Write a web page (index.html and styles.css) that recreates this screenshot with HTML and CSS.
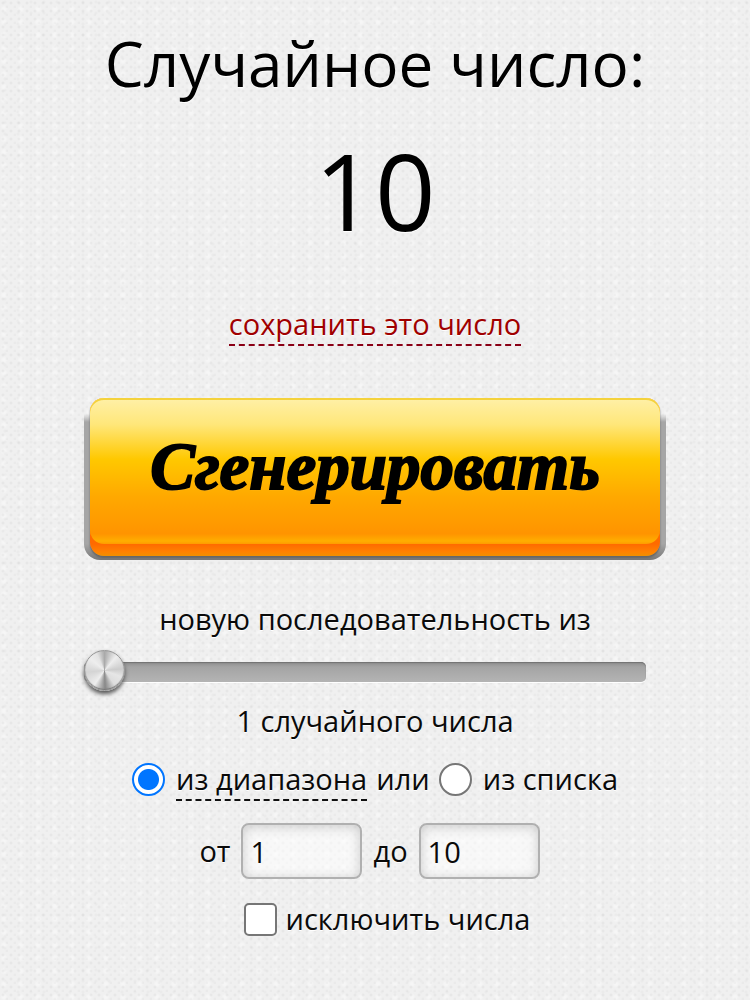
FILE: index.html
```
<!DOCTYPE html>
<html lang="ru">
<head>
    <title>Случайное число</title>
    <meta charset="utf-8">
    <meta name="viewport" content="width=device-width, initial-scale=1">
    <link rel="stylesheet" href="styles.css">
</head>
<body>
    <main class="generator">
        <h1>Случайное число:</h1>
        <output class="result">10</output>
        <a href="#" class="save-link">сохранить это число</a>

        <button type="button" class="generate"><span class="generate-face">Сгенерировать</span></button>

        <label class="caption" for="count">новую последовательность из</label>
        <input type="range" class="slider" id="count" min="1" max="100" value="1">
        <p class="caption">1 случайного числа</p>

        <div class="row source">
            <input type="radio" name="source" id="from-range" checked>
            <label for="from-range" class="active">из диапазона</label>
            <span>или</span>
            <input type="radio" name="source" id="from-list">
            <label for="from-list">из списка</label>
        </div>

        <div class="row limits">
            <label for="min">от</label>
            <input type="text" id="min" value="1">
            <label for="max">до</label>
            <input type="text" id="max" value="10">
        </div>

        <div class="row exclude">
            <input type="checkbox" id="exclude">
            <label for="exclude">исключить числа</label>
        </div>
    </main>
</body>
</html>
```

FILE: styles.css
```
* {
    margin: 0;
    padding: 0;
    box-sizing: border-box;
}

body {
    min-height: 100vh;
    color: #0a0a0a;
    font: 29px/40px "Open Sans", "Noto Sans", sans-serif;
    text-shadow: 0 1px 0 #fff;
    background-color: #f0f0f0;
    background-image:
        radial-gradient(circle at 3px 3px, rgba(0, 0, 0, 0.06) 0, transparent 2px),
        radial-gradient(circle at 7px 7px, rgba(0, 0, 0, 0.04) 0, transparent 2px),
        radial-gradient(circle at 5px 2px, rgba(0, 0, 0, 0.03) 0, transparent 2px),
        radial-gradient(circle at 4px 9px, rgba(255, 255, 255, 0.5) 0, transparent 4px);
    background-size: 8px 8px, 8px 8px, 13px 11px, 17px 13px;
}

.generator {
    display: flex;
    flex-direction: column;
    align-items: center;
    padding: 19px 84px;
}

h1 {
    color: #000;
    font-size: 62px;
    font-weight: normal;
    line-height: 88px;
    white-space: nowrap;
}

.result {
    margin-top: 11px;
    color: #000;
    font-size: 106px;
    line-height: 144px;
}

.save-link {
    margin-top: 42px;
    color: #a00000;
    text-decoration: none;
    border-bottom: 2px dashed #8a0016;
}

.generate {
    width: 100%;
    margin-top: 52px;
    padding: 0 6px 4px;
    border: 0;
    cursor: pointer;
    background: linear-gradient(transparent 16px, #a6a6a6 24px, #a6a6a6 90%, #777);
    border-radius: 16px;
}

.generate-face {
    display: block;
    position: relative;
    z-index: 0;
    height: 158px;
    color: #000;
    font: italic bold 67px/136px "Liberation Serif", serif;
    text-shadow: 0 1px 1px #ffc34d;
    -webkit-text-stroke: 2px #000;
    background: linear-gradient(#ff6a00 146px, #ff8200 154px, #f09000);
    border-radius: 14px;
    box-shadow: 0 2px 2px #666;
}

/* raised top of the button, the orange edge shows below it */
.generate-face::before {
    content: '';
    position: absolute;
    inset: 0 0 12px;
    z-index: -1;
    border-radius: 14px;
    background: linear-gradient(#fff0a8 0, #ffe77a 18%, #ffc800 42%, #ffa800 68%, #ff9400 93%, #ffae00 98%, #ff9a00 100%);
    box-shadow: inset 0 2px 0 #f4d23c;
}

.caption {
    display: block;
}

label.caption {
    margin-top: 39px;
}

.slider {
    appearance: none;
    align-self: flex-start;
    width: calc(100% - 20px);
    height: 42px;
    margin: 12px 0 8px;
    background: transparent;
}

.slider::-webkit-slider-runnable-track {
    height: 20px;
    border-radius: 5px;
    background: linear-gradient(#8c8c8c, #a4a4a4 5px, #b4b4b4);
    box-shadow: inset 0 1px 1px #737373, 0 1px 0 #fff;
}

.slider::-webkit-slider-thumb {
    appearance: none;
    width: 41px;
    height: 41px;
    margin-top: -12px;
    border: 1px solid #969696;
    border-radius: 50%;
    background: conic-gradient(#aaa, #eee 40deg, #ccc 85deg, #e6e6e6 110deg, #ddd 145deg, #888 178deg, #eee 215deg, #d4d4d4 265deg, #eee 310deg, #e4e4e4 335deg, #aaa);
    box-shadow: 0 3px 4px #555, inset 0 -1px 1px #777;
}

.row {
    display: flex;
    align-items: center;
    justify-content: center;
    gap: 9px;
    white-space: nowrap;
}

.row input[type="radio"],
.row input[type="checkbox"] {
    appearance: none;
    flex: none;
    width: 33px;
    height: 33px;
    border: 2px solid #767676;
    background: #fff;
}

.row input[type="radio"] {
    margin-right: 2px;
    border-radius: 50%;
}

.row input[type="radio"]:checked {
    border-color: #0075ff;
    background: radial-gradient(circle, #0075ff 10px, #fff 11px);
}

.row input[type="checkbox"] {
    border-radius: 5px;
}

.source {
    margin-top: 16px;
}

.source .active {
    margin-top: 2px;
    border-bottom: 2px dashed #111;
}

.limits {
    gap: 11px;
    margin-top: 22px;
    padding-right: 11px;
}

.limits input {
    width: 121px;
    height: 56px;
    padding: 0 7px;
    font: inherit;
    color: inherit;
    border: 2px solid #b0b0b0;
    border-radius: 8px;
    background: rgba(255, 255, 255, 0.5);
    box-shadow: inset 0 2px 12px rgba(0, 0, 0, 0.18);
}

.exclude {
    margin-top: 20px;
    padding-left: 24px;
}
```
